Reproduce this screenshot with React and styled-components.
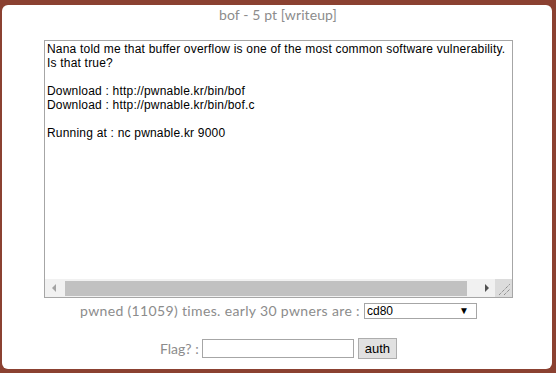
import React from "react";
import styled, { createGlobalStyle } from "styled-components";

const GlobalStyle = createGlobalStyle`
  html, body {
    margin: 0;
    padding: 0;
    background: #8b4131;
  }
  body {
    font-family: "Lato", "Liberation Sans", sans-serif;
  }
`;

const Page = styled.div`
  width: 556px;
  height: 373px;
  padding: 5px 4px 4px 2px;
  box-sizing: border-box;
`;

const Panel = styled.div`
  height: 100%;
  background: #fff;
  border-radius: 6px;
  display: flex;
  flex-direction: column;
  align-items: center;
  padding-top: 1px;
  box-sizing: border-box;
`;

const Title = styled.div`
  font-size: 14px;
  line-height: 17px;
  letter-spacing: 0.1px;
  color: #8c8c8c;
  margin-bottom: 17px;
  margin-left: 2px;
`;

const Box = styled.div`
  width: 469px;
  height: 258px;
  border: 1px solid #a6a6a6;
  box-sizing: border-box;
  display: flex;
  flex-direction: column;
  margin-left: 3px;
`;

const Content = styled.pre`
  flex: 1;
  margin: 0;
  padding: 1px 2px;
  font-family: "Liberation Sans", Arial, sans-serif;
  font-size: 12px;
  letter-spacing: 0.2px;
  line-height: 14px;
  color: #000;
  white-space: pre;
  overflow: hidden;
`;

const ScrollBar = styled.div`
  height: 18px;
  display: flex;
  background: #f1f1f1;
`;

const ScrollButton = styled.div`
  width: 17px;
  display: flex;
  align-items: center;
  justify-content: center;
`;

const Arrow = styled.div`
  width: 0;
  height: 0;
  border-top: 4px solid transparent;
  border-bottom: 4px solid transparent;
  ${(p) =>
    p.dir === "left"
      ? "border-right: 4px solid #a3a3a3;"
      : "border-left: 4px solid #505050;"}
`;

const Thumb = styled.div`
  flex: 1;
  margin: 2px 11px 1px 3px;
  background: #c1c1c1;
`;

const Corner = styled.div`
  width: 17px;
  background: #dcdcdc;
  display: flex;
  align-items: flex-end;
  justify-content: flex-end;
`;

const Stats = styled.div`
  margin-top: 4px;
  margin-left: 3px;
  display: flex;
  align-items: center;
  font-size: 14px;
  letter-spacing: 0.35px;
  color: #8c8c8c;
`;

const Select = styled.div`
  margin-left: 4px;
  width: 113px;
  height: 16px;
  border: 1px solid #a6a6a6;
  box-sizing: border-box;
  display: flex;
  align-items: center;
  justify-content: space-between;
  padding: 0 7px 0 2px;
  font-family: "Liberation Sans", Arial, sans-serif;
  font-size: 12px;
  letter-spacing: 0;
  color: #000;
`;

const Caret = styled.span`
  font-size: 10px;
`;

const FlagRow = styled.div`
  margin-top: 19px;
  margin-left: 3px;
  display: flex;
  align-items: center;
  font-size: 14px;
  color: #8c8c8c;
`;

const Input = styled.input`
  margin: 0 0 0 3px;
  width: 152px;
  height: 19px;
  border: 1px solid #a6a6a6;
  box-sizing: border-box;
  padding: 0 2px;
  outline: none;
`;

const Button = styled.button`
  margin-left: 4px;
  height: 21px;
  padding: 0 6px;
  border: 1px solid #adadad;
  background: #e1e1e1;
  font-family: "Liberation Sans", Arial, sans-serif;
  font-size: 13px;
  color: #000;
`;

const text = `Nana told me that buffer overflow is one of the most common software vulnerability.
Is that true?

Download : http://pwnable.kr/bin/bof
Download : http://pwnable.kr/bin/bof.c

Running at : nc pwnable.kr 9000`;

const App = () => {
  return (
    <Page>
      <GlobalStyle />
      <Panel>
        <Title>bof - 5 pt [writeup]</Title>
        <Box>
          <Content>{text}</Content>
          <ScrollBar>
            <ScrollButton>
              <Arrow dir="left" />
            </ScrollButton>
            <Thumb />
            <ScrollButton>
              <Arrow dir="right" />
            </ScrollButton>
            <Corner>
              <svg width="17" height="17" viewBox="0 0 17 17">
                <path d="M4 15 L15 4 M9 15 L15 9" stroke="#6d6d6d" strokeWidth="1" strokeDasharray="1 1" />
              </svg>
            </Corner>
          </ScrollBar>
        </Box>
        <Stats>
          pwned (11059) times. early 30 pwners are :
          <Select>
            <span>cd80</span>
            <Caret>▼</Caret>
          </Select>
        </Stats>
        <FlagRow>
          Flag? :
          <Input type="text" />
          <Button>auth</Button>
        </FlagRow>
      </Panel>
    </Page>
  );
};

export default App;
